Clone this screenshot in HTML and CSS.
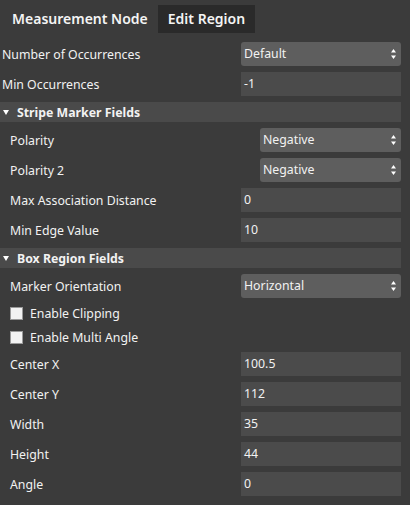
FILE: index.html
```html
<!DOCTYPE html>
<html>
<head>
<meta charset="utf-8">
<link rel="stylesheet" href="styles.css">
</head>
<body>
<div class="panel">
  <div class="tabs">
    <div class="tab">Measurement Node</div>
    <div class="tab active">Edit Region</div>
  </div>

  <div class="row top">
    <span class="label">Number of Occurrences</span>
    <div class="select"><span>Default</span><svg class="spin" width="5" height="10" viewBox="0 0 5 10"><polygon points="2.5,0 5,3.5 0,3.5" fill="#fff"/><polygon points="0,6.5 5,6.5 2.5,10" fill="#fff"/></svg></div>
  </div>
  <div class="row top">
    <span class="label">Min Occurrences</span>
    <div class="input">-1</div>
  </div>

  <div class="section"><svg class="tri" width="6" height="5" viewBox="0 0 6 5"><polygon points="0,0 6,0 3,5" fill="#fff"/></svg><span>Stripe Marker Fields</span></div>

  <div class="row">
    <span class="label">Polarity</span>
    <div class="select narrow"><span>Negative</span><svg class="spin" width="5" height="10" viewBox="0 0 5 10"><polygon points="2.5,0 5,3.5 0,3.5" fill="#fff"/><polygon points="0,6.5 5,6.5 2.5,10" fill="#fff"/></svg></div>
  </div>
  <div class="row">
    <span class="label">Polarity 2</span>
    <div class="select narrow"><span>Negative</span><svg class="spin" width="5" height="10" viewBox="0 0 5 10"><polygon points="2.5,0 5,3.5 0,3.5" fill="#fff"/><polygon points="0,6.5 5,6.5 2.5,10" fill="#fff"/></svg></div>
  </div>
  <div class="row">
    <span class="label">Max Association Distance</span>
    <div class="input">0</div>
  </div>
  <div class="row">
    <span class="label">Min Edge Value</span>
    <div class="input">10</div>
  </div>

  <div class="section"><svg class="tri" width="6" height="5" viewBox="0 0 6 5"><polygon points="0,0 6,0 3,5" fill="#fff"/></svg><span>Box Region Fields</span></div>

  <div class="row">
    <span class="label">Marker Orientation</span>
    <div class="select"><span>Horizontal</span><svg class="spin" width="5" height="10" viewBox="0 0 5 10"><polygon points="2.5,0 5,3.5 0,3.5" fill="#fff"/><polygon points="0,6.5 5,6.5 2.5,10" fill="#fff"/></svg></div>
  </div>
  <div class="check-row">
    <span class="box"></span><span class="label">Enable Clipping</span>
  </div>
  <div class="check-row">
    <span class="box"></span><span class="label">Enable Multi Angle</span>
  </div>
  <div class="row">
    <span class="label">Center X</span>
    <div class="input">100.5</div>
  </div>
  <div class="row">
    <span class="label">Center Y</span>
    <div class="input">112</div>
  </div>
  <div class="row">
    <span class="label">Width</span>
    <div class="input">35</div>
  </div>
  <div class="row">
    <span class="label">Height</span>
    <div class="input">44</div>
  </div>
  <div class="row">
    <span class="label">Angle</span>
    <div class="input">0</div>
  </div>
</div>
</body>
</html>
```

FILE: styles.css
```css
html, body {
  margin: 0;
  padding: 0;
  background: #3b3b3b;
}
body {
  width: 410px;
  height: 505px;
  overflow: hidden;
  font-family: "Noto Sans", "Open Sans", sans-serif;
  font-size: 12.3px;
  color: #f2f2f2;
}
.panel {
  display: flex;
  flex-direction: column;
  gap: 6px;
  width: 401px;
}
.tabs {
  display: flex;
  padding: 5px 0 3px 2px;
}
.tab {
  height: 28px;
  line-height: 28px;
  padding: 0 10px;
  font-size: 14px;
  font-weight: 600;
  color: #f4f4f4;
}
.tab.active {
  background: #2a2a2a;
}
.row {
  display: flex;
  align-items: center;
  height: 24px;
  padding-left: 10px;
}
.row.top {
  padding-left: 2px;
}
.label {
  white-space: nowrap;
}
.input, .select {
  margin-left: auto;
  box-sizing: border-box;
  width: 160px;
  height: 24px;
  line-height: 24px;
  padding-left: 3px;
}
.input {
  background: #4b4b4b;
}
.select {
  background: #5e5e5e;
  border-radius: 3px;
  display: flex;
  align-items: center;
  justify-content: space-between;
  padding-right: 5px;
}
.select.narrow {
  width: 141px;
}
.spin {
  display: block;
}
.section {
  display: flex;
  align-items: center;
  height: 20px;
  background: #4a4a4a;
  font-weight: 700;
  padding-left: 3px;
  gap: 8px;
}
.tri {
  display: block;
}
.check-row {
  display: flex;
  align-items: center;
  height: 18px;
  padding-left: 10px;
  gap: 7px;
}
.box {
  box-sizing: border-box;
  width: 13px;
  height: 13px;
  background: #f3f3f3;
  border: 1px solid #9a9a9a;
}
```
